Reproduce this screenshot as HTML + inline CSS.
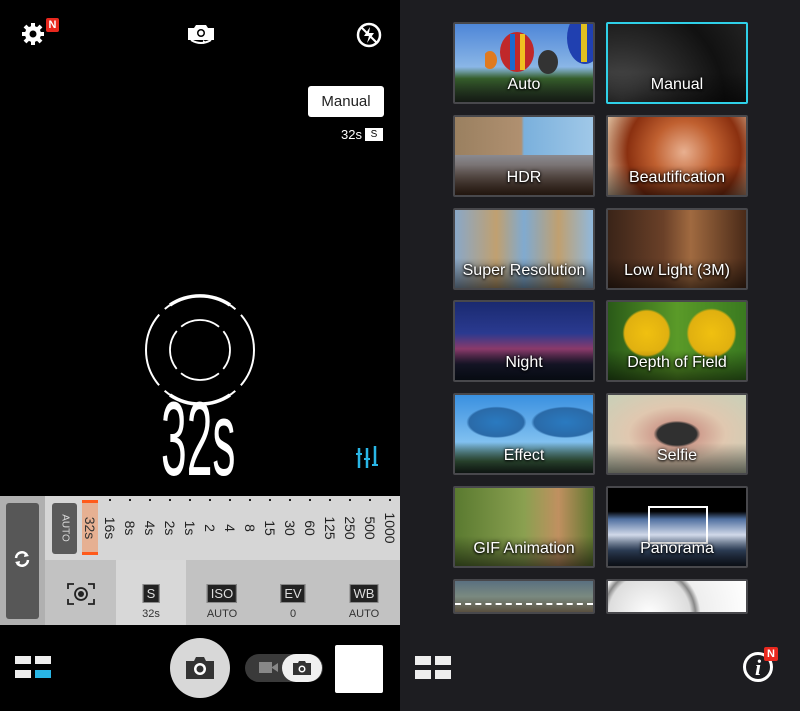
<!DOCTYPE html>
<html><head><meta charset="utf-8"><style>
*{margin:0;padding:0;box-sizing:border-box}
body{width:800px;height:711px;background:#000;position:relative;overflow:hidden;font-family:"Liberation Sans",sans-serif}
.abs{position:absolute}
#right{left:400px;top:0;width:400px;height:711px;background:#1d1d21}
.tile{position:absolute;width:142px;height:82px;border:2px solid #48484c;border-radius:2px;overflow:hidden}
.tile span{position:absolute;left:0;right:0;bottom:8px;text-align:center;color:#fff;font-size:16px;text-shadow:0 0 3px #000,0 1px 2px #000}
.tile i{position:absolute;left:0;right:0;bottom:0;height:30px;background:linear-gradient(transparent,rgba(0,0,0,.55))}
.rl{position:absolute;top:503px;width:20px;height:50px;transform-origin:center;font-size:14px;color:#222}
.rl b{position:absolute;left:50%;top:50%;transform:translate(-50%,-50%) rotate(90deg);font-weight:normal;white-space:nowrap}
.dot{position:absolute;top:499px;width:2px;height:2px;background:#222}
.cell{position:absolute;top:560px;height:65px;width:70px;text-align:center;color:#333;font-size:11px}
.badge{position:absolute;top:24px;left:50%;transform:translateX(-50%);background:#222;color:#ddd;font-size:13px;padding:1px 3px;border:1px solid #888;font-family:"Liberation Sans Narrow","Liberation Sans",sans-serif}
</style></head><body>

<svg class="abs" style="left:20px;top:20px" width="30" height="30" viewBox="0 0 30 30">
<g fill="#fff"><circle cx="13" cy="14" r="8"/>
<g stroke="#fff" stroke-width="4"><line x1="13" y1="3" x2="13" y2="25"/><line x1="2" y1="14" x2="24" y2="14"/><line x1="5" y1="6" x2="21" y2="22"/><line x1="21" y1="6" x2="5" y2="22"/></g></g>
<circle cx="13" cy="14" r="3.5" fill="#000"/></svg>
<div class="abs" style="left:46px;top:18px;width:13px;height:14px;background:#e8281e;color:#fff;font-size:11px;font-weight:bold;text-align:center;line-height:14px;border-radius:2px">N</div>
<svg class="abs" style="left:185px;top:22px" width="32" height="26" viewBox="0 0 32 26">
<path d="M3 6h6l2-3h10l2 3h6v12H3z" fill="#fff"/><circle cx="16" cy="11" r="4" fill="#000"/><circle cx="16" cy="11" r="2.5" fill="#fff"/>
<path d="M6 18 q10 6 20 0" stroke="#fff" stroke-width="2" fill="none"/><path d="M18 22l3-2-3-2z" fill="#fff"/></svg>
<svg class="abs" style="left:356px;top:22px" width="26" height="26" viewBox="0 0 26 26">
<circle cx="13" cy="13" r="11" stroke="#fff" stroke-width="2.5" fill="none"/><path d="M14 5l-6 9h5l-2 7 7-10h-5z" fill="#fff"/><line x1="5" y1="5" x2="21" y2="21" stroke="#fff" stroke-width="2"/></svg>

<div class="abs" style="left:308px;top:86px;width:76px;height:31px;background:#fff;border-radius:3px;font-size:15px;color:#222;text-align:center;line-height:31px">Manual</div>
<div class="abs" style="left:341px;top:127px;color:#fff;font-size:13px;font-family:'Liberation Sans Narrow','Liberation Sans',sans-serif">32s</div>
<div class="abs" style="left:365px;top:128px;width:18px;height:13px;background:#fff;color:#000;font-size:10px;text-align:center;line-height:13px">S</div>

<svg class="abs" style="left:140px;top:290px" width="120" height="120" viewBox="0 0 120 120">
<circle cx="60" cy="60" r="54" fill="none" stroke="#fff" stroke-width="2" stroke-dasharray="77 7.8" stroke-dashoffset="-46.3"/>
<path d="M30 15 A54 54 0 0 1 90 15" fill="none" stroke="#fff" stroke-width="3.5"/>
<path d="M90 105 A54 54 0 0 1 30 105" fill="none" stroke="#fff" stroke-width="3.5"/>
<circle cx="60" cy="60" r="30" fill="none" stroke="#fff" stroke-width="1.8" stroke-dasharray="41 6.1" stroke-dashoffset="-26.6"/>
</svg>
<div class="abs" style="left:161px;top:387px;color:#fff;font-size:105px;line-height:1;transform:scaleX(.44);transform-origin:left top;font-family:'Liberation Sans',sans-serif;white-space:nowrap">32s</div>
<svg class="abs" style="left:355px;top:444px" width="26" height="26" viewBox="0 0 26 26"><g stroke="#29b6e6" stroke-width="2.5" fill="#29b6e6">
<line x1="4" y1="4" x2="4" y2="24"/><line x1="12" y1="4" x2="12" y2="24"/><line x1="20" y1="2" x2="20" y2="22"/>
<rect x="1" y="9" width="6" height="2" stroke="none"/><rect x="9" y="14" width="6" height="2" stroke="none"/><rect x="17" y="20" width="6" height="2" stroke="none"/></g></svg>

<div class="abs" style="left:0;top:496px;width:400px;height:129px;background:#c2c2c2"></div>
<div class="abs" style="left:45px;top:496px;width:355px;height:64px;background:#d6d6d6"></div>
<div class="abs" style="left:116px;top:560px;width:70px;height:65px;background:#d8d8d8"></div>
<div class="abs" style="left:0;top:496px;width:45px;height:129px;background:#b0b0b0"></div>
<div class="abs" style="left:6px;top:503px;width:33px;height:116px;background:#575757;border-radius:3px"></div>
<svg class="abs" style="left:12px;top:549px" width="20" height="20" viewBox="0 0 20 20"><g fill="none" stroke="#fff" stroke-width="2.5"><path d="M4 9a6 6 0 0 1 11-3"/><path d="M16 11a6 6 0 0 1-11 3"/></g><path d="M13 3l4 4-5 1z M7 17l-4-4 5-1z" fill="#fff"/></svg>
<div class="abs" style="left:52px;top:503px;width:25px;height:51px;background:#5a5a5a;border-radius:3px"></div>
<div class="rl" style="left:55px;color:#ddd;font-size:10px"><b>AUTO</b></div>
<div class="abs" style="left:82px;top:500px;width:16px;height:55px;background:#e6b092;border-top:3px solid #ff5a1a;border-bottom:3px solid #ff5a1a"></div>
<div class="rl" style="left:80px;color:#333"><b>32s</b></div>
<div class="rl" style="left:100px"><b>16s</b></div>
<div class="rl" style="left:120px"><b>8s</b></div>
<div class="rl" style="left:140px"><b>4s</b></div>
<div class="rl" style="left:160px"><b>2s</b></div>
<div class="rl" style="left:180px"><b>1s</b></div>
<div class="rl" style="left:200px"><b>2</b></div>
<div class="rl" style="left:220px"><b>4</b></div>
<div class="rl" style="left:240px"><b>8</b></div>
<div class="rl" style="left:260px"><b>15</b></div>
<div class="rl" style="left:280px"><b>30</b></div>
<div class="rl" style="left:300px"><b>60</b></div>
<div class="rl" style="left:320px"><b>125</b></div>
<div class="rl" style="left:340px"><b>250</b></div>
<div class="rl" style="left:360px"><b>500</b></div>
<div class="rl" style="left:380px"><b>1000</b></div>
<div class="dot" style="left:109px"></div><div class="dot" style="left:129px"></div><div class="dot" style="left:149px"></div><div class="dot" style="left:169px"></div><div class="dot" style="left:189px"></div><div class="dot" style="left:209px"></div><div class="dot" style="left:229px"></div><div class="dot" style="left:249px"></div><div class="dot" style="left:269px"></div><div class="dot" style="left:289px"></div><div class="dot" style="left:309px"></div><div class="dot" style="left:329px"></div><div class="dot" style="left:349px"></div><div class="dot" style="left:369px"></div><div class="dot" style="left:389px"></div>

<svg class="abs" style="left:67px;top:583px" width="28" height="22" viewBox="0 0 28 22"><g fill="none" stroke="#222" stroke-width="1.8"><path d="M1 6V1h6M21 1h6v5M27 16v5h-6M7 21H1v-5"/><circle cx="14" cy="11" r="6"/></g><circle cx="14" cy="11" r="3" fill="#222"/></svg>
<div class="cell" style="left:116px"><div class="badge">S</div><div style="position:absolute;top:48px;width:100%">32s</div></div>
<div class="cell" style="left:187px"><div class="badge">ISO</div><div style="position:absolute;top:48px;width:100%">AUTO</div></div>
<div class="cell" style="left:258px"><div class="badge">EV</div><div style="position:absolute;top:48px;width:100%">0</div></div>
<div class="cell" style="left:329px"><div class="badge">WB</div><div style="position:absolute;top:48px;width:100%">AUTO</div></div>

<div class="abs" style="left:15px;top:656px;width:16px;height:8px;background:#eee"></div>
<div class="abs" style="left:35px;top:656px;width:16px;height:8px;background:#eee"></div>
<div class="abs" style="left:15px;top:670px;width:16px;height:8px;background:#eee"></div>
<div class="abs" style="left:35px;top:670px;width:16px;height:8px;background:#29b6e6"></div>
<div class="abs" style="left:170px;top:638px;width:60px;height:60px;border-radius:50%;background:#d8d8d8"></div>
<svg class="abs" style="left:185px;top:656px" width="30" height="24" viewBox="0 0 30 24"><path d="M1 5h8l2-4h8l2 4h8v18H1z" fill="#333"/><circle cx="15" cy="13" r="6" fill="#fff"/><circle cx="15" cy="13" r="3.5" fill="#333"/></svg>
<div class="abs" style="left:245px;top:654px;width:78px;height:28px;border-radius:14px;background:#3a3a3a"></div>
<svg class="abs" style="left:259px;top:661px" width="19" height="13" viewBox="0 0 19 13"><rect x="0" y="1" width="13" height="11" fill="#888"/><path d="M13 6l6-4v9l-6-4z" fill="#888"/></svg>
<div class="abs" style="left:282px;top:654px;width:40px;height:28px;border-radius:14px;background:#f0f0f0"></div>
<svg class="abs" style="left:292px;top:660px" width="20" height="16" viewBox="0 0 20 16"><path d="M1 3h5l1-2h6l1 2h5v12H1z" fill="#333"/><circle cx="10" cy="9" r="3.5" fill="#fff"/><circle cx="10" cy="9" r="2" fill="#333"/></svg>
<div class="abs" style="left:335px;top:645px;width:48px;height:48px;background:#fff;border-radius:2px"></div>

<div id="right" class="abs"></div>
<div class="tile" style="left:453px;top:22px;background:linear-gradient(#4e86d8 0%,#8ab6e6 55%,#3c6a30 70%,#2c3a2c 100%)"><svg class="abs" style="left:30px;top:6px" width="80" height="50"><ellipse cx="32" cy="22" rx="17" ry="20" fill="#c0282a"/><rect x="25" y="4" width="5" height="36" fill="#1a6ad0"/><rect x="35" y="4" width="5" height="36" fill="#f0c020"/><ellipse cx="5" cy="30" rx="7" ry="9" fill="#e07a20"/><ellipse cx="63" cy="32" rx="10" ry="12" fill="#333"/></svg><svg class="abs" style="left:108px;top:-2px" width="34" height="50"><ellipse cx="22" cy="16" rx="18" ry="26" fill="#2040b0"/><rect x="18" y="0" width="6" height="40" fill="#e0c020"/></svg><i></i><span>Auto</span></div>
<div class="tile" style="left:606px;top:22px;border-color:#2fd0e8;background:radial-gradient(circle at 10% 100%,#555 0,#2a2a2a 40%,#111 70%,#222 100%)"><i></i><span>Manual</span></div>

<div class="tile" style="left:453px;top:115px;background:linear-gradient(90deg,#9a8060 0,#b09070 48%,#7ab0dc 50%,#a0c8e8 100%)"><div class="abs" style="left:0;right:0;bottom:0;height:40px;background:linear-gradient(#8a8a90,#4a3020)"></div><i></i><span>HDR</span></div>
<div class="tile" style="left:606px;top:115px;background:radial-gradient(circle at 55% 45%,#e8b090 0,#c06030 35%,#8a3010 65%,#e8d0b0 100%)"><i></i><span>Beautification</span></div>

<div class="tile" style="left:453px;top:208px;background:linear-gradient(90deg,#8aa8c8,#c0a070 30%,#80aad0 50%,#c0a070 75%,#90b8dc)"><i></i><span>Super Resolution</span></div>
<div class="tile" style="left:606px;top:208px;background:linear-gradient(90deg,#3a2418,#6a4028 40%,#a06a40 60%,#4a2a18)"><i></i><span>Low Light (3M)</span></div>

<div class="tile" style="left:453px;top:300px;background:linear-gradient(#1a2a70 0,#2a3a90 40%,#8a3a6a 60%,#1a1a30 80%,#101828)"><i></i><span>Night</span></div>
<div class="tile" style="left:606px;top:300px;background:radial-gradient(circle at 28% 40%,#f0c010 0,#e0b010 20%,transparent 22%),radial-gradient(circle at 75% 40%,#f0c010 0,#e0b010 20%,transparent 22%),linear-gradient(90deg,#2a5a18,#5a9a28 50%,#3a7a20)"><i></i><span>Depth of Field</span></div>

<div class="tile" style="left:453px;top:393px;background:radial-gradient(ellipse at 30% 35%,#2a7ac0 0,#2a6aa8 20%,transparent 22%),radial-gradient(ellipse at 80% 35%,#2a7ac0 0,#2a6aa8 20%,transparent 22%),linear-gradient(#3a90e0,#80c0f0 60%,#3a6040 85%,#203028)"><i></i><span>Effect</span></div>
<div class="tile" style="left:606px;top:393px;background:radial-gradient(ellipse at 50% 50%,#303030 0,#303030 20%,#d0a090 24%,#e0c8b0 50%,#c8d0b8 100%)"><i></i><span>Selfie</span></div>

<div class="tile" style="left:453px;top:486px;background:linear-gradient(90deg,#5a7a30,#8aa050 50%,#c09060 75%,#607830)"><i></i><span>GIF Animation</span></div>
<div class="tile" style="left:606px;top:486px;background:linear-gradient(#000 0,#000 30%,#5070a0 40%,#d0d8e8 60%,#3a5070 80%,#182030)"><div class="abs" style="left:40px;top:18px;width:60px;height:38px;border:2px solid #fff"></div><i></i><span>Panorama</span></div>

<div class="tile" style="left:453px;top:579px;height:35px;background:linear-gradient(#5a7080,#7a8a80 50%,#5a5040)"><div class="abs" style="left:0;right:0;top:22px;border-top:2px dashed #fff"></div></div>
<div class="tile" style="left:606px;top:579px;height:35px;background:radial-gradient(circle at 30% 110%,#fff 0,#ddd 40%,#888 45%,#eee 50%,#fff 100%)"></div>

<div class="abs" style="left:415px;top:656px;width:16px;height:9px;background:#eee"></div>
<div class="abs" style="left:435px;top:656px;width:16px;height:9px;background:#eee"></div>
<div class="abs" style="left:415px;top:670px;width:16px;height:9px;background:#eee"></div>
<div class="abs" style="left:435px;top:670px;width:16px;height:9px;background:#eee"></div>
<div class="abs" style="left:743px;top:652px;width:30px;height:30px;border:3px solid #fff;border-radius:50%;color:#fff;font-family:'Liberation Serif',serif;font-style:italic;font-weight:bold;font-size:22px;text-align:center;line-height:25px">i</div>
<div class="abs" style="left:764px;top:647px;width:14px;height:14px;background:#e8281e;color:#fff;font-size:11px;font-weight:bold;text-align:center;line-height:14px;border-radius:2px">N</div>
</body></html>
